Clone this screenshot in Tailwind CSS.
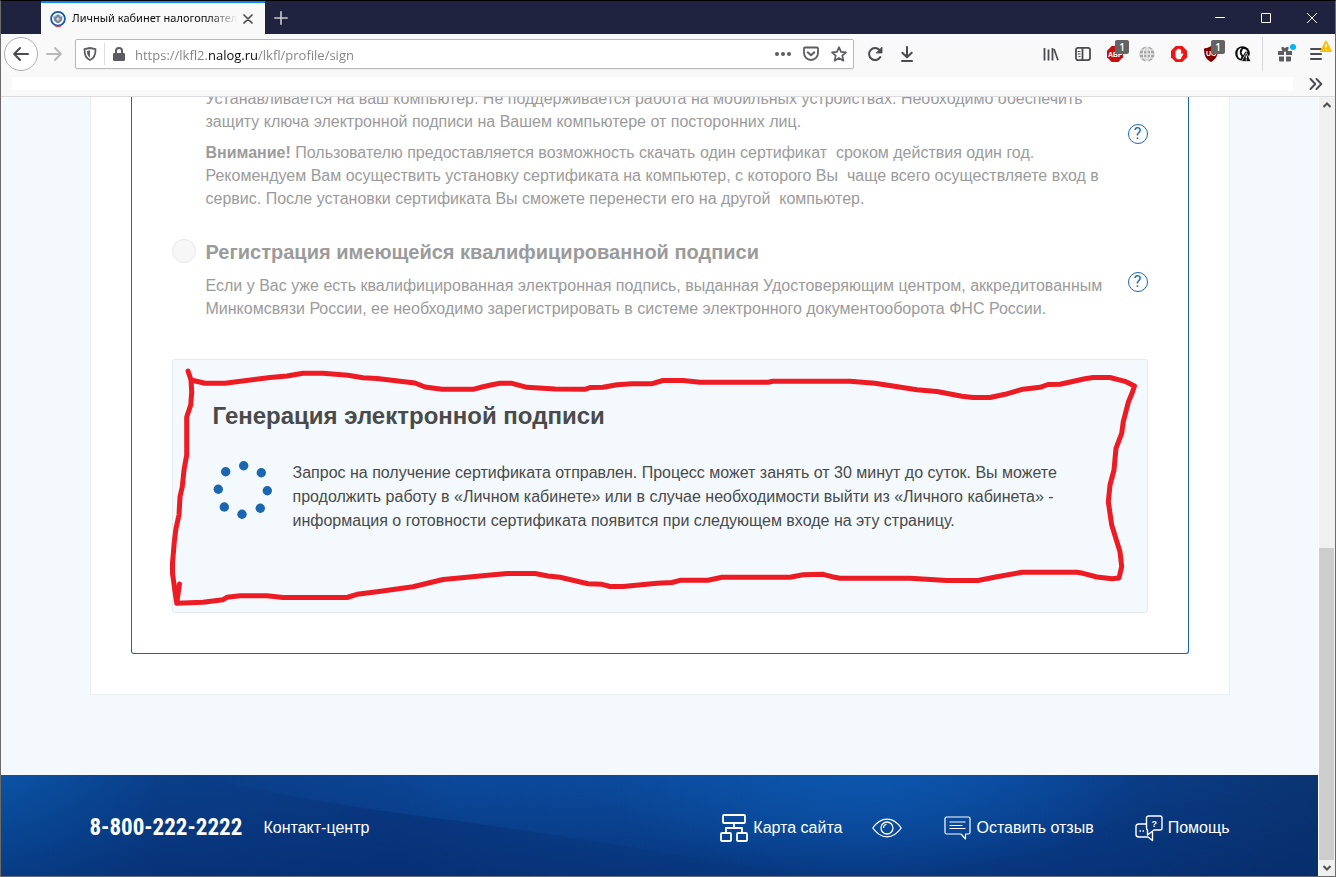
<!DOCTYPE html>
<html lang="ru">
<head>
<meta charset="utf-8">
<meta name="viewport" content="width=device-width, initial-scale=1">
<title>Личный кабинет налогоплательщика</title>
<script src="https://cdn.jsdelivr.net/npm/@tailwindcss/browser@4"></script>
</head>
<body class="flex h-screen flex-col overflow-hidden border border-t-black border-x-[#6b6b6b] border-b-[#6b6b6b] bg-[#f9f9fa] font-['Liberation_Sans',Arial,sans-serif] text-base text-[#4a4a4f]">

<!-- Tab strip -->
<header class="shrink-0">
  <div class="flex h-[33px] bg-[#202340]">
    <div class="ml-10 flex w-56 items-center border-t-2 border-[#0a84ff] bg-[#f9f9fa] pl-[9px]">
      <svg class="size-4 shrink-0" viewBox="0 0 16 16" aria-hidden="true">
        <circle cx="8" cy="7.800" r="6.900" fill="#fff" stroke="#1456a8" stroke-width="1.800"/>
        <circle cx="8" cy="7.800" r="4.300" fill="#9fb3cc"/>
        <path d="M3.500 5 6 6.500 6.500 4.500 8 3.500 9.500 4.500 10 6.500 12.500 5 12 9 10 11 8 12.500 6 11 4 9Z" fill="#6d84a6"/>
        <path d="M8 6 10 8 8 10.500 6 8Z" fill="#e8cfa6"/>
        <path d="M5 15.500Q8 16.500 11 15.500L10.800 14Q8 14.800 5.200 14Z" fill="#e0314a"/>
      </svg>
      <span class="ml-[6px] w-[166px] overflow-hidden whitespace-nowrap font-['Noto_Sans',sans-serif] text-[11px] text-[#0c0c0d] [mask-image:linear-gradient(to_right,black_82%,transparent)]">Личный кабинет налогоплательщика</span>
      <button class="grid size-5 shrink-0 place-items-center" aria-label="Закрыть вкладку">
        <svg class="size-[10px]" viewBox="0 0 10 10" fill="none" stroke="#4a4a4f" stroke-width="1.700" stroke-linecap="round"><path d="M1 1 9 9M9 1 1 9"/></svg>
      </button>
    </div>
    <button class="grid w-8 place-items-center" aria-label="Новая вкладка">
      <svg class="size-[14px]" viewBox="0 0 14 14" stroke="#c9cad2" stroke-width="1.600" stroke-linecap="round"><path d="M7 .8V13.200M.8 7H13.200"/></svg>
    </button>
    <div class="ml-auto flex">
      <button class="grid w-[46px] place-items-center" aria-label="Свернуть"><svg class="size-[10px]" viewBox="0 0 10 10" stroke="#fff"><path d="M0 4.500H10"/></svg></button>
      <button class="grid w-[46px] place-items-center" aria-label="Развернуть"><svg class="size-[10px]" viewBox="0 0 10 10" fill="none" stroke="#fff"><path d="M.5.5H9.500V9.500H.5Z"/></svg></button>
      <button class="grid w-[46px] place-items-center" aria-label="Закрыть"><svg class="size-[10px]" viewBox="0 0 10 10" stroke="#fff"><path d="M0 0 10 10M10 0 0 10"/></svg></button>
    </div>
  </div>

  <!-- Navigation toolbar -->
  <div class="flex h-10 items-center pl-[3px] pr-[2px]">
    <button class="grid size-[34px] shrink-0 place-items-center rounded-full border border-[#b1b1b3] bg-white" aria-label="Назад">
      <svg class="size-4" viewBox="0 0 16 16" fill="none" stroke="#4a4a4f" stroke-width="2" stroke-linecap="round" stroke-linejoin="round"><path d="M15 8H1.500M7 2 1.200 8 7 14"/></svg>
    </button>
    <button class="grid size-8 shrink-0 place-items-center" aria-label="Вперёд" disabled>
      <svg class="size-4" viewBox="0 0 16 16" fill="none" stroke="#b9b9bb" stroke-width="2" stroke-linecap="round" stroke-linejoin="round"><path d="M1 8H14.500M9 2 14.800 8 9 14"/></svg>
    </button>
    <div class="ml-[5px] flex h-[30px] flex-1 items-center rounded-xs border border-[#b9b9bb] bg-white shadow-xs">
      <button class="grid w-7 place-items-center" aria-label="Защита от отслеживания">
        <svg class="size-[14px]" viewBox="0 0 14 14" fill="none"><path d="M7 1 12.500 2.200C12.700 8 11 11.200 7 13 3 11.200 1.300 8 1.500 2.200Z" stroke="#5c5c61" stroke-width="1.800" stroke-linejoin="round"/><path d="M7 3.300V10.600C5 9.300 4 7.200 3.900 4Z" fill="#5c5c61"/></svg>
      </button>
      <span class="h-[22px] w-px bg-[#dcdcde]"></span>
      <button class="grid w-7 place-items-center" aria-label="Сведения о сайте">
        <svg class="h-[14px] w-3" viewBox="0 0 12 14"><path d="M3 7V4a3 3 0 0 1 6 0V7" fill="none" stroke="#5c5c61" stroke-width="2"/><rect y="6" width="12" height="8" rx="1.200" fill="#5c5c61"/></svg>
      </button>
      <input type="text" aria-label="Адрес" value="https://lkfl2.nalog.ru/lkfl/profile/sign" spellcheck="false" class="ml-[2px] min-w-0 flex-1 bg-[linear-gradient(to_right,#808085_73px,#0c0c0d_73px,#0c0c0d_122px,#808085_122px)] bg-clip-text pt-1 font-['Open_Sans',sans-serif] text-[13px] text-transparent outline-none">
      <button class="grid w-7 place-items-center" aria-label="Действия на странице">
        <svg class="size-4" viewBox="0 0 16 16" fill="#5c5c61"><circle cx="2" cy="8" r="2"/><circle cx="8" cy="8" r="2"/><circle cx="14" cy="8" r="2"/></svg>
      </button>
      <button class="grid w-7 place-items-center" aria-label="Сохранить в Pocket">
        <svg class="size-4" viewBox="0 0 16 16" fill="none" stroke="#5c5c61" stroke-width="1.800" stroke-linecap="round" stroke-linejoin="round"><path d="M2 1.500H14Q15 1.500 15 2.500V7A7 7 0 0 1 1 7V2.500Q1 1.500 2 1.500Z"/><path d="M4.700 6.300 8 9.300 11.300 6.300" stroke-width="2"/></svg>
      </button>
      <button class="grid w-7 place-items-center" aria-label="Добавить в закладки">
        <svg class="size-4" viewBox="0 0 16 16" fill="none" stroke="#5c5c61" stroke-width="1.700" stroke-linejoin="round"><path d="M8 1.200 10 5.800 15 6.300 11.300 9.600 12.400 14.700 8 12 3.600 14.700 4.700 9.600 1 6.300 6 5.800Z"/></svg>
      </button>
    </div>
    <button class="ml-[5px] grid size-8 shrink-0 place-items-center" aria-label="Обновить">
      <svg class="size-4" viewBox="0 0 16 16" fill="none" stroke="#4a4a4f" stroke-width="2" stroke-linecap="round"><path d="M13.300 11A6 6 0 1 1 12.500 4"/><path d="M15 1.500V7H9.500Z" fill="#4a4a4f" stroke-width=".8" stroke-linejoin="round"/></svg>
    </button>
    <button class="grid size-8 shrink-0 place-items-center" aria-label="Загрузки">
      <svg class="size-4" viewBox="0 0 16 16" fill="none" stroke="#4a4a4f" stroke-width="2" stroke-linecap="round" stroke-linejoin="round"><path d="M8 1V11M3.300 6.800 8 11.300 12.700 6.800M3 15H13"/></svg>
    </button>
    <div class="ml-28 flex shrink-0 items-center">
      <button class="grid size-8 place-items-center" aria-label="Библиотека">
        <svg class="size-4" viewBox="0 0 16 16" fill="none" stroke="#4a4a4f"><path d="M1.500 2V14.500M5.500 3.500V14.500M9.500 2V14.500" stroke-width="1.800"/><path d="M11 3 15 14.300" stroke-width="1.700"/></svg>
      </button>
      <button class="grid size-8 place-items-center" aria-label="Боковая панель">
        <svg class="size-4" viewBox="0 0 16 16" fill="none" stroke="#4a4a4f" stroke-width="1.800"><rect x="1" y="1.900" width="14" height="12.200" rx="2"/><path d="M7.500 2V14"/><path d="M2.700 5.500H5.500M2.700 8H5.500M3.500 10.500H5.500" stroke-width="1"/></svg>
      </button>
      <button class="relative grid size-8 place-items-center" aria-label="Adblock Plus">
        <svg class="size-4" viewBox="0 0 16 16"><path d="M4.700 0H11.300L16 4.700V11.300L11.300 16H4.700L0 11.300V4.700Z" fill="#c70d0d"/><text x="1" y="11" fill="#fff" font-family="Liberation Sans" font-weight="700" font-size="7">ABP</text></svg>
        <span class="absolute right-[2px] top-[2px] grid h-[14px] w-[14px] place-items-center rounded-xs bg-[#636363] font-['Open_Sans',sans-serif] text-[10px] font-semibold leading-[14px] text-white">1</span>
      </button>
      <button class="grid size-8 place-items-center" aria-label="Глобус">
        <svg class="size-4" viewBox="0 0 16 16"><circle cx="8" cy="8" r="7.600" fill="#a6a6a6"/><path d="M8 0V16M0 8H16M1.500 4H14.500M1.500 12H14.500M8 .5C3 4 3 12 8 15.500M8 .5C13 4 13 12 8 15.500" fill="none" stroke="#f9f9fa"/></svg>
      </button>
      <button class="grid size-8 place-items-center" aria-label="AdBlock">
        <svg class="size-4" viewBox="0 0 16 16"><path d="M4.700 0H11.300L16 4.700V11.300L11.300 16H4.700L0 11.300V4.700Z" fill="#f01313"/><path d="M4.500 7.500V4.800Q5 4 5.700 4.800V3.600Q6.500 2.700 7.200 3.500V3Q8 2.200 8.700 3V3.700Q9.600 3 10.200 4V8.300L11.500 7.300Q12.500 7 12.300 8L10 12.500Q9.500 13.200 8.500 13.200H6.800Q4.500 12.800 4.500 10.500Z" fill="#fff"/></svg>
      </button>
      <button class="relative grid size-8 place-items-center" aria-label="uBlock Origin">
        <svg class="size-4" viewBox="0 0 16 16"><path d="M8 0Q11 2 15 2.500C15 9.500 13 13.500 8 16 3 13.500 1 9.500 1 2.500Q5 2 8 0Z" fill="#800000"/><text x="3" y="10" fill="#fff" font-family="Liberation Sans" font-weight="700" font-size="7">UO</text></svg>
        <span class="absolute right-[2px] top-[2px] grid h-[14px] w-[14px] place-items-center rounded-xs bg-[#636363] font-['Open_Sans',sans-serif] text-[10px] font-semibold leading-[14px] text-white">1</span>
      </button>
      <button class="grid size-8 place-items-center" aria-label="Расширение">
        <svg class="size-4" viewBox="0 0 16 16"><circle cx="7.500" cy="7.500" r="7.300" fill="#0c0c0d"/><path d="M2.500 7.500C2.500 4 4.500 1.800 6.500 2 5 3.500 4.500 5 5 8L6.500 10.500 5.500 13Q2.500 11.500 2.500 7.500Z" fill="#fff"/><path d="M8 3Q11.500 2.500 12.500 6L10.500 5.500 8 9.500 6.500 6.500Z" fill="#fff"/><path d="M11.300 6.500 16 15.500H6.600Z" fill="#0c0c0d" stroke="#f9f9fa" stroke-width=".7"/><path d="M11.300 9.500V12.500M11.300 13.300V14.500" stroke="#fff" stroke-width="1.200"/></svg>
      </button>
      <span class="ml-[3px] mr-[6px] h-[34px] w-px bg-[#d7d7db]"></span>
      <button class="relative grid size-8 place-items-center" aria-label="Что нового">
        <svg class="size-4" viewBox="0 0 16 16" fill="#5c5c61"><path d="M1 5H7V9H1ZM9 5H15V9H9ZM2 10.500H7V15.500H3Q2 15.500 2 14.500ZM9 10.500H14V14.500Q14 15.500 13 15.500H9Z"/><path d="M8 5Q5 4.500 5.300 1.800 7.500 1.500 8 5 8.500 1.500 10.700 1.800 11 4.500 8 5" fill="none" stroke="#5c5c61" stroke-width="1.700"/></svg>
        <span class="absolute right-[5px] top-[6px] size-[6px] rounded-full bg-[#00b3f4]"></span>
      </button>
      <button class="relative grid size-8 place-items-center" aria-label="Меню">
        <svg class="size-4" viewBox="0 0 16 16" stroke="#4a4a4f" stroke-width="2" stroke-linecap="round"><path d="M2 3H12M2 8H12M2 13H12"/></svg>
        <svg class="absolute right-px top-[2px] size-3" viewBox="0 0 12 12"><path d="M6 1 11.300 11.300H.7Z" fill="#ffbf00" stroke="#ffbf00" stroke-width="1.300" stroke-linejoin="round"/><path d="M6 4V7.500M6 9V10.500" stroke="#fff" stroke-width="1.300"/></svg>
      </button>
    </div>
  </div>

  <!-- Bookmarks bar -->
  <div class="flex h-[23px] items-start justify-between border-b border-[#dcdcde] pl-[11px] pr-3 pt-[3px]">
    <div class="mr-4 h-[13px] flex-1 bg-white"></div>
    <button class="grid h-[14px] w-[14px] place-items-center" aria-label="Другие закладки">
      <svg class="size-[14px]" viewBox="0 0 14 14" fill="none" stroke="#4a4a4f" stroke-width="1.900" stroke-linecap="round" stroke-linejoin="round"><path d="M1.500 2 6.300 7 1.500 12M7.500 2 12.300 7 7.500 12"/></svg>
    </button>
  </div>
</header>

<div class="flex min-h-0 flex-1">
  <!-- Page, scrolled to its end -->
  <div class="flex min-w-0 flex-1 flex-col justify-end overflow-hidden border-r border-white bg-[#f3f9fc]">
    <main class="mx-auto mb-20 w-full max-w-[1140px] shrink-0 border border-[#e9eef0] bg-white px-10 pb-10">
      <section class="rounded-b-[3px] border border-t-0 border-[#1b66b0] px-10 pb-10">
        <div class="flex items-center text-[#9b9b9b]">
          <div class="flex-1 pl-[34px] pr-5 leading-[23px]">
            <p>Устанавливается на ваш компьютер. Не поддерживается работа на мобильных устройствах. Необходимо обеспечить<br>защиту ключа электронной подписи на Вашем компьютере от посторонних лиц.</p>
            <p class="mt-2"><b>Внимание!</b> Пользователю предоставляется возможность скачать один сертификат&nbsp; сроком действия один год.<br>Рекомендуем Вам осуществить установку сертификата на компьютер, с которого Вы&nbsp; чаще всего осуществляете вход в<br>сервис. После установки сертификата Вы сможете перенести его на другой&nbsp; компьютер.</p>
          </div>
          <button class="mb-[30px] grid size-5 shrink-0 place-items-center rounded-full border border-[#1b66b0] font-['Roboto',sans-serif] text-base leading-[18px] text-[#1b66b0]" aria-label="Подсказка">?</button>
        </div>
        <div class="mt-[26px] flex items-start text-[#9b9b9b]">
          <input id="reg" type="radio" disabled class="mt-[3px] size-6 shrink-0 appearance-none rounded-full border border-[#e8e8e8] bg-[#f7f7f7]">
          <div class="flex-1 pl-[10px] pr-5">
            <label for="reg" class="block text-xl font-bold leading-8">Регистрация имеющейся квалифицированной подписи</label>
            <p class="mt-[6px] leading-[23px]">Если у Вас уже есть квалифицированная электронная подпись, выданная Удостоверяющим центром, аккредитованным<br>Минкомсвязи России, ее необходимо зарегистрировать в системе электронного документооборота ФНС России.</p>
          </div>
          <button class="mt-9 grid size-5 shrink-0 place-items-center rounded-full border border-[#1b66b0] font-['Roboto',sans-serif] text-base leading-[18px] text-[#1b66b0]" aria-label="Подсказка">?</button>
        </div>

        <div class="relative mt-[39px] rounded-[3px] border border-[#e6e9ea] bg-[#f3f9fc] px-10 pb-[79px] pt-10 text-[#4a4a4a]">
          <h2 class="text-2xl font-bold leading-8">Генерация электронной подписи</h2>
          <div class="mt-7 flex items-start gap-5">
            <svg class="size-[60px] shrink-0" viewBox="213 460 60 60" fill="#1b66b0" role="img" aria-label="Загрузка">
              <circle cx="243.700" cy="465.700" r="4.700"/><circle cx="261.300" cy="472.700" r="4.700"/><circle cx="267.300" cy="490.700" r="4.700"/><circle cx="260.300" cy="508.300" r="4.700"/><circle cx="242" cy="514.300" r="4.700"/><circle cx="224.300" cy="507" r="4.700"/><circle cx="218.300" cy="489.300" r="4.700"/><circle cx="225.700" cy="471.700" r="4.700"/>
            </svg>
            <p class="pt-px leading-6">Запрос на получение сертификата отправлен. Процесс может занять от 30 минут до суток. Вы можете<br>продолжить работу в «Личном кабинете» или в случае необходимости выйти из «Личного кабинета» -<br>информация о готовности сертификата появится при следующем входе на эту страницу.</p>
          </div>
          <!-- Hand-drawn red outline -->
          <svg class="pointer-events-none absolute -inset-px h-[calc(100%+2px)] w-[calc(100%+2px)] overflow-visible" viewBox="172 359 976 254" preserveAspectRatio="none" fill="none" stroke="#ed1c24" stroke-width="5" stroke-linecap="round" stroke-linejoin="round" aria-hidden="true">
            <path d="M188 371 191 380 205 383.300 225 383.300 270 377.500 287 376 303 373.200 323 373.200 348 375.200 363 377.700 377 378.500 415 383 425 387 442 389.300 473 389.300 482 387 492 384.700 500 383.300 512 383.300 527 387.300 555 389 585 389.300 590 387.500 603 387.300 617 384.700 632 383.700 652 383.700 663 380.500 683 380.500 700 382.300 768 382.300 773 381.300 850 381.300 875 383.300 917 389.700 937 391.500 962 396.300 973 397.500 990 397.500 1005 394.300 1023 389.200 1040 387.300 1048 384.500 1060 384.300 1085 378.700 1093 377.500 1110 377.500 1125 381.300 1134.500 386 1132 393.300 1128.300 402.300 1123.300 421.700 1121.700 433.300 1116 448.300 1114 470 1110 485 1108.300 501.700 1111.700 525 1120 551.700 1121.700 566.700 1119 578 1112 578.700 1097 577 1083 573.300 1077 572.300 1022 572.300 997 576.700 978 580.500 947 580.500 910 578.300 840 578.300 832 576.700 823 574.300 803 574.700 790 577.300 722 577.300 708 580.300 680 580.300 672 582.500 657 583.300 623 586.500 610 586.500 602 584.300 588 583.800 560 577.300 548 576 535 573.500 507 573.500 480 576 467 577.300 443 579.500 413 586.700 377 591.700 357 594.300 347 597.500 283 597.500 267 595.700 240 595.700 227 597.300 223 599.700 203 602.300 176.700 603.300 179.500 584M176.500 602 172.500 573.300 172.500 563.300 174.300 541.700 176 528.300 179 515 180 496.700 182.300 486.700 184 470 186.700 455 186.700 417 190.700 405 191.700 392 191 380"/>
          </svg>
        </div>
      </section>
    </main>

    <footer class="relative shrink-0 bg-[linear-gradient(to_right,#0b54a6_0%,#0a3f8a_12%,#0a3a84_30%,#0a4492_48%,#0b4c9e_65%,#0a4190_80%,#0a3472_100%)] text-white">
      <!-- Diagonal light wedge and the darker lower edge -->
      <svg class="absolute inset-0 size-full" viewBox="0 0 1317 101" preserveAspectRatio="none" aria-hidden="true">
        <defs>
          <linearGradient id="wedge" x1="0" x2="1"><stop offset="0" stop-color="#0b50a0" stop-opacity="0"/><stop offset=".3" stop-color="#0c4fa4" stop-opacity=".7"/><stop offset="1" stop-color="#0c52a6" stop-opacity="0"/></linearGradient>
          <linearGradient id="shade" x1="0" y1="0" x2="0" y2="1"><stop offset="0" stop-color="#042868" stop-opacity="0"/><stop offset="1" stop-color="#042868" stop-opacity=".55"/></linearGradient>
          <radialGradient id="glow" cx="865" cy="0" r="1" gradientUnits="userSpaceOnUse" gradientTransform="translate(865 0) scale(280 100) translate(-865 0)"><stop offset="0" stop-color="#0c58b0" stop-opacity=".8"/><stop offset="1" stop-color="#0c58b0" stop-opacity="0"/></radialGradient>
        </defs>
        <path d="M190 0Q300 26 420 41 580 62 800 101H1100V0Z" fill="url(#wedge)"/>
        <rect width="1317" height="101" fill="url(#shade)"/>
        <rect width="1317" height="101" fill="url(#glow)"/>
      </svg>
      <div class="relative mx-auto flex h-[101px] w-full max-w-[1140px] items-center pt-[5px]">
        <a href="tel:88002222222" class="min-w-[154px] whitespace-nowrap font-['Roboto_Condensed','Roboto',sans-serif] text-[23px] font-bold leading-8">8-800-222-2222</a>
        <a href="#contact" class="ml-5">Контакт-центр</a>
        <nav class="ml-auto flex items-center">
          <a href="#map" class="flex items-center gap-[5px]">
            <svg class="size-7" viewBox="0 0 28 28" fill="none" stroke="#fff" stroke-width="1.800" stroke-linejoin="round"><rect x="3" y="1" width="22" height="8" rx="1"/><rect x="1" y="19" width="10" height="8" rx="1"/><rect x="17" y="19" width="10" height="8" rx="1"/><path d="M14 9V14M6 19V14H22V19"/></svg>
            Карта сайта</a>
          <a href="#vision" class="ml-[30px]" aria-label="Версия для слабовидящих">
            <svg class="h-5 w-[30px]" viewBox="0 0 30 20" fill="none" stroke="#fff" stroke-width="1.300" stroke-linejoin="round"><path d="M.8 10Q7 1.200 15 1.200T29.200 10Q23 18.800 15 18.800T.8 10Z"/><circle cx="15" cy="10" r="6"/><path d="M11.500 10A3.700 3.700 0 0 1 14.500 6.300" stroke-width="1.100"/></svg>
          </a>
          <a href="#feedback" class="ml-[42px] flex items-center gap-[5px]">
            <svg class="h-6 w-[27px]" viewBox="0 0 27 24" fill="none" stroke="#fff" stroke-width="1.200" stroke-linejoin="round"><path d="M2.500 1H24.500Q26 1 26 2.500V16.500Q26 18 24.500 18H21.500V23L17 18H2.500Q1 18 1 16.500V2.500Q1 1 2.500 1Z"/><path d="M5.500 6H21.500M5.500 9.500H18.500M5.500 12.500H21.500"/></svg>
            Оставить отзыв</a>
          <a href="#help" class="ml-[41px] flex items-center gap-[5px]">
            <svg class="h-[27px] w-7" viewBox="0 0 28 27" fill="none" stroke="#fff" stroke-width="1.400" stroke-linejoin="round"><path d="M14 1H25Q27 1 27 3V13Q27 15 25 15H19L12.500 20V15Q11.500 14.500 11.500 13V3Q11.500 1 14 1Z"/><path d="M11 9H4Q1 9 1 11.500V19.500Q1 22 4 22H13L17.500 25.500V17"/><text x="16.500" y="11.500" fill="#fff" stroke="none" font-family="Liberation Sans" font-weight="700" font-size="9">?</text><path d="M4.500 16H6M7.500 16H9" stroke-width="1.300"/></svg>
            Помощь</a>
        </nav>
      </div>
    </footer>
  </div>

  <!-- Scrollbar -->
  <div class="flex w-4 shrink-0 flex-col bg-[#f0f0f0]">
    <button class="grid h-4 place-items-center" aria-label="Прокрутить вверх"><svg class="h-[6px] w-2" viewBox="0 0 8 6" fill="none" stroke="#505050" stroke-width="2"><path d="M.5 5 4 1.500 7.500 5"/></svg></button>
    <div class="flex-[436]"></div>
    <div class="mr-px flex-[312] bg-[#cdcdcd]"></div>
    <button class="grid h-4 place-items-center" aria-label="Прокрутить вниз"><svg class="h-[6px] w-2" viewBox="0 0 8 6" fill="none" stroke="#505050" stroke-width="2"><path d="M.5 1 4 4.500 7.500 1"/></svg></button>
  </div>
</div>
</body>
</html>
